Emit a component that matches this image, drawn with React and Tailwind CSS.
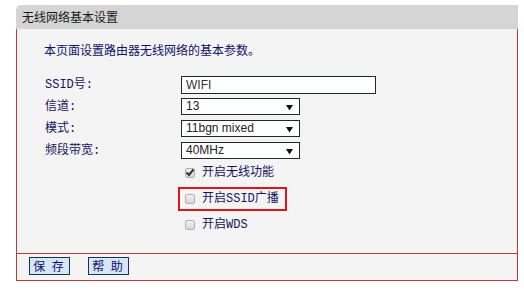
import React from 'react';

const cjk = { fontFamily: '"Noto Sans CJK SC", "Liberation Sans", sans-serif' };
const monoCjk = { fontFamily: '"Liberation Mono", "Noto Sans CJK SC", monospace' };
const latin = { fontFamily: '"Liberation Sans", Arial, sans-serif' };

function Arrow() {
  return (
    <svg width="7" height="7" viewBox="0 0 7 7" className="absolute right-[6px] top-[5px]">
      <path d="M0 1 H7 L3.5 6.5 Z" fill="#111" />
    </svg>
  );
}

function Select({ value }) {
  return (
    <div
      className="relative w-[119px] h-[17px] border border-[#1c2a2a] bg-white pl-[4px] text-[12px] leading-[15px] text-[#222]"
      style={latin}
    >
      {value}
      <Arrow />
    </div>
  );
}

function Check({ checked }) {
  return (
    <span className="relative inline-block w-[10px] h-[10px] rounded-[2px] border border-[#b0b0b0] bg-gradient-to-b from-[#f2f2f2] to-[#d8d8d8]">
      {checked && (
        <svg width="10" height="9" viewBox="0 0 10 9" className="absolute left-[-1px] top-[-1px]">
          <path d="M1.5 4.5 L4 7 L8.5 1.5" stroke="#333" strokeWidth="2" fill="none" />
        </svg>
      )}
    </span>
  );
}

function Row({ label, children, className }) {
  return (
    <div className={`flex items-center ${className}`}>
      <div className="w-[136px] text-[12px] text-[#15155c]" style={monoCjk}>
        {label}
      </div>
      {children}
    </div>
  );
}

function CheckRow({ label, checked, boxed }) {
  return (
    <div
      className={`ml-[133px] w-[109px] h-[24px] flex items-center gap-[7px] pl-[5px] border-2 ${
        boxed ? 'border-[#e0141a]' : 'border-transparent'
      }`}
    >
      <Check checked={checked} />
      <span className="text-[12px] text-[#15155c]" style={monoCjk}>
        {label}
      </span>
    </div>
  );
}

export default function App() {
  return (
    <div className="w-[524px] h-[295px] bg-white pt-[5px] pl-[16px]" style={cjk}>
      <div className="w-[502px]">
        {/* 標題 */}
        <div className="h-[24px] bg-[#d5d5d5] rounded-tl-[5px] pl-[6px] text-[12px] leading-[24px] text-[#1a1a1a]">
          无线网络基本设置
        </div>

        {/* 內容 */}
        <div className="h-[224px] border-l border-r border-[#b83c3c] bg-[#f4f4f4] pl-[28px] pt-[13px]">
          <div className="ml-[-1px] text-[12px] leading-[16px] text-[#10106a]">
            本页面设置路由器无线网络的基本参数。
          </div>

          <Row label="SSID号:" className="mt-[18px] h-[18px]">
            <div
              className="w-[195px] h-[18px] border border-[#1c2a2a] bg-white pl-[4px] text-[12px] leading-[16px] text-[#333]"
              style={latin}
            >
              WIFI
            </div>
          </Row>
          <Row label="信道:" className="mt-[4px] h-[17px]">
            <Select value="13" />
          </Row>
          <Row label="模式:" className="mt-[5px] h-[17px]">
            <Select value="11bgn mixed" />
          </Row>
          <Row label="频段带宽:" className="mt-[5px] h-[17px]">
            <Select value="40MHz" />
          </Row>

          <div className="mt-[2px] flex flex-col gap-[2px]">
            <CheckRow label="开启无线功能" checked />
            <CheckRow label="开启SSID广播" boxed />
            <CheckRow label="开启WDS" />
          </div>
        </div>

        {/* 按鈕 */}
        <div className="h-[28px] border border-[#b83c3c] bg-[#f4f4f4] pl-[12px] pt-[3px] flex gap-[18px]">
          <button className="w-[41px] h-[18px] border border-[#1e3440] bg-[#d4e6f8] text-[12px] leading-[16px] text-[#10106a] tracking-[2px]">
            保 存
          </button>
          <button className="w-[41px] h-[18px] border border-[#1e3440] bg-[#d4e6f8] text-[12px] leading-[16px] text-[#10106a] tracking-[2px]">
            帮 助
          </button>
        </div>
      </div>
    </div>
  );
}
